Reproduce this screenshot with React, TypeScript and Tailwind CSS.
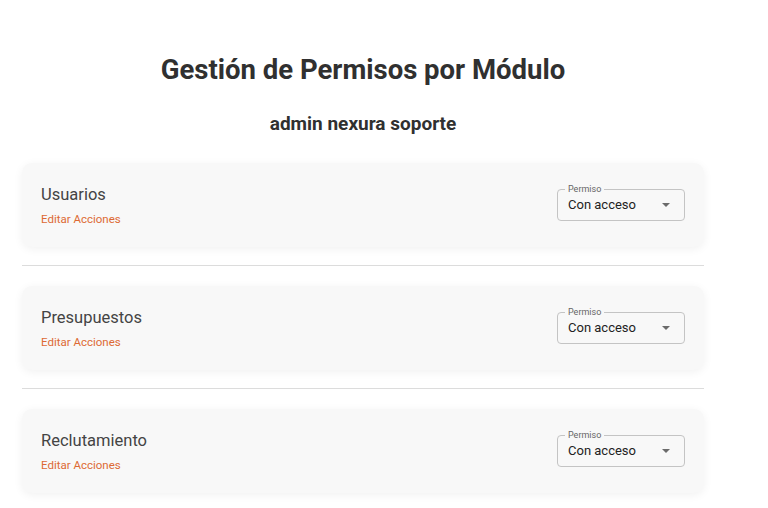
import React from "react";

const modules = ["Usuarios", "Presupuestos", "Reclutamiento"];

const PermissionSelect: React.FC = () => (
  <div className="relative w-[128px] h-[32px] border border-[#c4c4c4] rounded-[4px] bg-transparent flex items-center pl-[10px] pr-[14px]">
    <span className="absolute -top-[7px] left-[7px] px-[3px] bg-[#f8f8f8] text-[9px] leading-[12px] text-[#666]">
      Permiso
    </span>
    <span className="text-[13px] text-[#222] flex-1">Con acceso</span>
    <svg width="8" height="4" viewBox="0 0 8 4" className="text-[#6b6b6b]">
      <path d="M0 0 L4 4 L8 0 Z" fill="currentColor" />
    </svg>
  </div>
);

const App: React.FC = () => {
  return (
    <div className="min-h-screen bg-white font-['Roboto',sans-serif]">
      <div className="w-[682px] ml-[22px] pt-[52px]">
        <h1 className="text-[27.5px] leading-[36px] font-bold text-[#303030] text-center">
          Gestión de Permisos por Módulo
        </h1>
        <h2 className="mt-[23px] text-[19px] leading-[26px] font-bold text-[#303030] text-center">
          admin nexura soporte
        </h2>
        <div className="mt-[26px]">
          {modules.map((name, i) => (
            <div key={name}>
              {i > 0 && <hr className="border-0 h-px bg-[#dcdcdc] mt-[18px] mb-[20px]" />}
              <div className="h-[84px] bg-[#f8f8f8] rounded-[10px] shadow-[0_2px_10px_rgba(0,0,0,0.06)] flex items-center justify-between pl-[19px] pr-[19px]">
                <div className="flex flex-col">
                  <span className="text-[16.5px] leading-[22px] text-[#444]">{name}</span>
                  <span className="mt-[6px] text-[11.5px] leading-[14px] text-[#dd6a34]">Editar Acciones</span>
                </div>
                <PermissionSelect />
              </div>
            </div>
          ))}
        </div>
      </div>
    </div>
  );
};

export default App;
